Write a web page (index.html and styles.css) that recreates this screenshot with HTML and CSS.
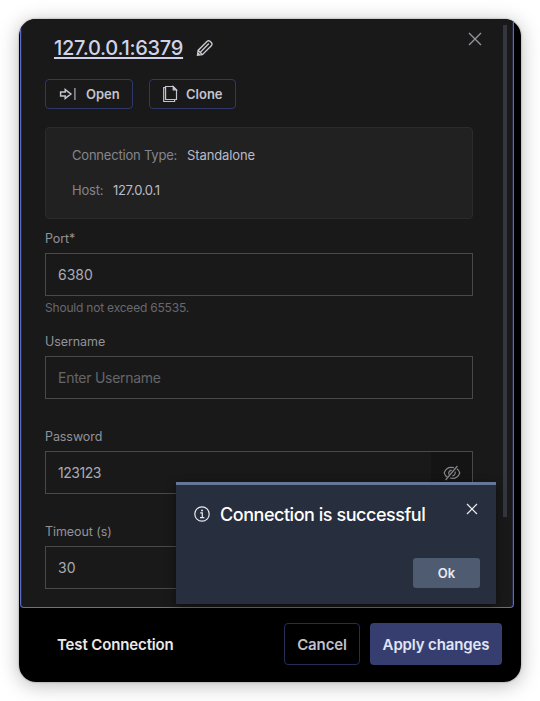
FILE: index.html
```html
<!DOCTYPE html>
<html lang="en">
<head>
<meta charset="utf-8">
<title>Edit connection</title>
<link rel="stylesheet" href="styles.css">
</head>
<body>
<main class="window">
  <section class="panel">
    <header class="title-row">
      <h1 class="title">127.0.0.1:6379</h1>
      <svg class="pencil" width="18" height="18" viewBox="0 0 18 18"><path d="M1.5 16.3 2.1 11.4 11.2 2.3Q12.6 1.1 14 2.3L15.5 3.8Q16.7 5.2 15.5 6.6L6.4 15.7ZM4.6 12.9 12.9 4.6M2.3 11.6 6.2 15.5M1.9 14 3.8 15.9"/></svg>
      <svg class="close" width="14" height="14" viewBox="0 0 14 14"><path d="M1 1 13 13M13 1 1 13"/></svg>
    </header>
    <div class="actions">
      <button class="outline-btn open">
        <svg width="18" height="16" viewBox="0 0 18 16"><path d="M1.6 6H6.2V3.6L11.9 8 6.2 12.4V10H1.6Z"/><path class="bar" d="M15.9 2V14"/></svg>
        <span>Open</span>
      </button>
      <button class="outline-btn clone">
        <svg width="16" height="18" viewBox="0 0 16 18"><path d="M2.6 1.5H10L13.5 5V14.5H2.6ZM2.6 2.6H.7V16.5H11.6V14.7"/><path class="fold" d="M10.2 1.5V4.8H13.5Z"/></svg>
        <span>Clone</span>
      </button>
    </div>
    <dl class="info">
      <div><dt class="t-type">Connection Type:</dt><dd class="t-standalone">Standalone</dd></div>
      <div><dt class="t-host">Host:</dt><dd class="t-ip">127.0.0.1</dd></div>
    </dl>
    <div class="field port">
      <label>Port*</label>
      <div class="input"><span>6380</span></div>
      <p class="hint">Should not exceed 65535.</p>
    </div>
    <div class="field username">
      <label>Username</label>
      <div class="input"><span class="placeholder">Enter Username</span></div>
    </div>
    <div class="field password">
      <label>Password</label>
      <div class="input"><span class="tight">123123</span>
        <div class="eye"><svg width="18" height="16" viewBox="0 0 18 16"><path d="M11 2.7C6 1.4 2.6 4 1.2 7.8Q2 10.5 4.3 12.2M13.9 3.8Q16.2 5.5 16.8 8C15 12.4 11.5 14.3 7 13M2.6 15 14.4 1M5.8 9.5Q5.2 5.8 8.8 5.1M9.3 11Q12.6 10.2 12.2 6.6"/></svg></div>
      </div>
    </div>
    <div class="field timeout">
      <label>Timeout (s)</label>
      <div class="input"><span>30</span></div>
    </div>
    <div class="scrollbar"></div>
  </section>
  <footer class="footer">
    <span class="test">Test Connection</span>
    <button class="cancel"><span>Cancel</span></button>
    <button class="apply"><span>Apply changes</span></button>
  </footer>
  <aside class="toast">
    <div class="toast-head">
      <svg class="info-icon" width="16" height="16" viewBox="0 0 16 16"><circle cx="8" cy="8" r="7.2"/><path d="M6.2 6.8H8.3V11.7M6 11.7H10.4"/><circle class="dot" cx="8" cy="4.4" r="1"/></svg>
      <strong>Connection is successful</strong>
      <svg class="toast-close" width="12" height="12" viewBox="0 0 12 12"><path d="M1 1 11 11M11 1 1 11"/></svg>
    </div>
    <button class="ok">Ok</button>
  </aside>
</main>
</body>
</html>
```

FILE: styles.css
```css
* { box-sizing: border-box; }
body {
  margin: 0;
  width: 540px;
  height: 701px;
  overflow: hidden;
  padding: 19px;
  background: #fff;
  font-family: Inter, "Liberation Sans", sans-serif;
  font-size: 13px;
  color: #b5b6c0;
}
h1, dl, dd, p { margin: 0; font-weight: 400; }
button { font: inherit; padding: 0; margin: 0; }
span, label, strong, dt, dd, h1 { white-space: nowrap; }
svg { fill: none; stroke: currentColor; stroke-width: 1.2; flex: none; }
.window {
  position: relative;
  width: 502px;
  height: 663px;
  border-radius: 17px;
  overflow: hidden;
  background: #000;
  display: flex;
  flex-direction: column;
}
body::before {
  content: "";
  position: absolute;
  left: 19px;
  top: 19px;
  width: 502px;
  height: 663px;
  border-radius: 17px;
  box-shadow: 0 0 2px rgba(0,0,0,.4), 0 3px 20px rgba(0,0,0,.28);
}
.panel {
  position: relative;
  width: 494px;
  height: 589px;
  margin-left: 1px;
  padding: 0 40px 0 24px;
  border: solid #5c6cc4;
  border-width: 0 1px 1px;
  border-radius: 0 0 4px 4px;
  background: #191919;
  box-shadow: inset 1px 0 #232848, inset -1px 0 #232848;
}
.title-row { display: flex; align-items: flex-start; height: 60px; padding-left: 9px; }
.title {
  margin-top: 17px;
  width: 129px;
  font-size: 20px;
  line-height: 24px;
  font-weight: 500;
  letter-spacing: -.28px;
  color: #d0d3e9;
  text-decoration: underline;
  text-decoration-thickness: 2px;
  text-underline-offset: 2px;
  text-decoration-skip-ink: none;
}
.pencil { margin: 20px 0 0 13px; color: #c7c8d0; stroke-width: 1.4; }
.close { margin: 13px -9px 0 auto; color: #94959b; stroke-width: 1.4; }
.actions { display: flex; gap: 16px; height: 48px; }
.outline-btn {
  display: flex;
  align-items: center;
  height: 30px;
  border: 1px solid #2f3969;
  border-radius: 4px;
  background: transparent;
  color: #c3c4ce;
  font-weight: 600;
}
.open { width: 88px; padding-left: 13px; gap: 9px; }
.open svg { stroke-width: 1.5; }
.clone { width: 87px; padding-left: 13px; gap: 7px; }
.bar { stroke: #92939b; }
.fold { fill: currentColor; }
.info {
  height: 92px;
  width: 428px;
  padding: 19px 26px;
  border: 1px solid #2b2b2b;
  border-radius: 4px;
  background: #212121;
}
.info div { display: flex; height: 35px; line-height: 17px; }
.info dt { color: #85868d; letter-spacing: -.2px; }
.info dd { color: #b9bbc9; letter-spacing: -.1px; }
.info .t-ip { letter-spacing: -.3px; }
.t-type { width: 115px; }
.t-host { width: 41px; }
.field { width: 428px; }
.port { height: 103px; padding-top: 11px; }
.username { height: 95px; padding-top: 11px; }
.password { height: 95px; padding-top: 11px; }
.timeout { padding-top: 11px; }
.field label { display: block; height: 23px; line-height: 17px; font-size: 12.5px; letter-spacing: -.08px; color: #929399; }
.input {
  display: flex;
  align-items: center;
  height: 43px;
  padding-left: 12px;
  border: 1px solid #494949;
  font-size: 14px;
  color: #a9abb5;
}
.tight { letter-spacing: -.45px; }
.placeholder { color: #65666a; letter-spacing: -.27px; }
.hint { line-height: 24px; font-size: 12px; letter-spacing: -.2px; color: #68696d; }
.eye {
  margin-left: auto;
  width: 41px;
  height: 41px;
  display: flex;
  align-items: center;
  justify-content: center;
  background: #141414;
  color: #85868d;
}
.eye svg { stroke-width: 1.2; }
.scrollbar { position: absolute; right: 6px; top: 6px; width: 4px; height: 492px; background: #343740; }
.footer { flex: 1; display: flex; align-items: center; padding: 0 19px 2px 38px; }
.footer { font-size: 15px; font-weight: 600; letter-spacing: -.13px; }
.test { margin-right: auto; color: #e9e9e9; }
.footer button { height: 42px; border-radius: 4px; letter-spacing: -.13px; }
.cancel { width: 76px; margin-right: 10px; border: 1px solid #252d57; background: #000; color: #bec0cd; }
.apply { width: 132px; border: 0; background: #363e70; color: #e2e5f6; }
.toast {
  position: absolute;
  left: 157px;
  top: 463px;
  width: 320px;
  height: 122px;
  padding: 20px 16px 0 18px;
  border-top: 3px solid #64769a;
  background: #272e3e;
  box-shadow: 0 3px 10px rgba(0,0,0,.45);
}
.toast-head { display: flex; height: 53px; color: #e9ebf1; }
.info-icon { margin-top: 1px; margin-right: 10px; }
.dot { fill: currentColor; stroke: none; }
.toast strong { font-size: 18px; line-height: 20px; font-weight: 500; letter-spacing: -.46px; color: #fff; }
.toast-close { margin: -2px 2px 0 auto; }
.ok {
  display: block;
  margin-left: auto;
  width: 67px;
  height: 30px;
  border: 0;
  border-radius: 3px;
  background: #4e5b71;
  color: #e7eaf2;
  font-weight: 600;
}
```
